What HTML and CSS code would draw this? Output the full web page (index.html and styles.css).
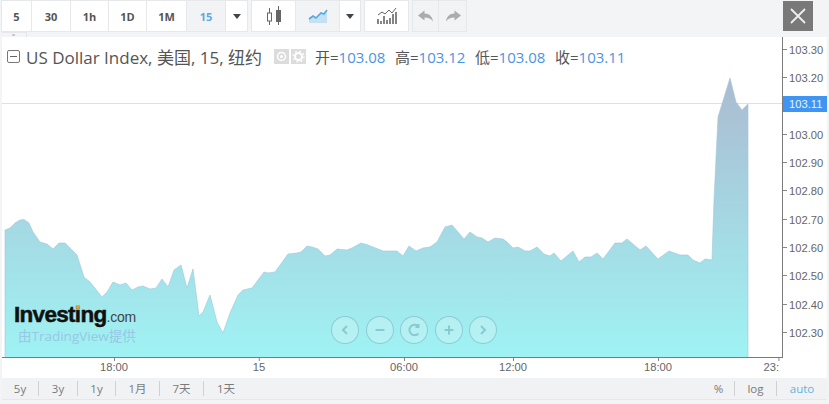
FILE: index.html
```html
<!DOCTYPE html>
<html lang="zh">
<head>
<meta charset="utf-8">
<title>US Dollar Index</title>
<link rel="stylesheet" href="styles.css">
</head>
<body>
<div class="page">
  <header class="toolbar">
    <div class="group">
      <button class="btn w30">5</button>
      <button class="btn w39">30</button>
      <button class="btn w38">1h</button>
      <button class="btn w38">1D</button>
      <button class="btn w40">1M</button>
      <button class="btn w39 active">15</button>
      <button class="btn w21"><span class="caret"></span></button>
    </div>
    <div class="group">
      <button class="btn w44">
        <svg width="16" height="22" viewBox="0 0 16 22"><path d="M3.500 3v5M3.500 16v4M12.500 1v4M12.500 17v3" stroke="#666" fill="none"/><rect x="1.500" y="8" width="4" height="8" fill="#fff" stroke="#666"/><rect x="10" y="5" width="5" height="12" fill="#666"/></svg>
      </button>
      <button class="btn w44 active">
        <svg width="20" height="14" viewBox="0 0 20 14"><path d="M1 10l4-3 3 2 5-5 3 1 3-4v13H1z" fill="#c4e0f3"/><path d="M1 10l4-3 3 2 5-5 3 1 3-4" fill="none" stroke="#5aa7dc" stroke-width="1.600"/></svg>
      </button>
      <button class="btn w20"><span class="caret"></span></button>
    </div>
    <div class="group">
      <button class="btn w43">
        <svg width="20" height="18" viewBox="0 0 20 18"><path d="M1 17v-5M4 17v-3M7 17V9M10 17v-4M13 17v-6M16 17V7M19 17V5" stroke="#666" stroke-width="1.600" fill="none"/><path d="M1 8l4-3 3 2 4-4 3 3 4-5" stroke="#666" fill="none"/></svg>
      </button>
    </div>
    <div class="group">
      <button class="btn w26 muted">
        <svg width="16" height="12" viewBox="0 0 16 12"><path d="M6.500 0.500L0 5.500l6.500 5V7.500c4 0 6.500 1 8.500 4C14.500 7 11.500 3.500 6.500 3.500z" fill="#a9adb1"/></svg>
      </button>
      <button class="btn w27 muted">
        <svg width="16" height="12" viewBox="0 0 16 12"><path d="M9.500 0.500L16 5.500l-6.500 5V7.500c-4 0-6.500 1-8.500 4C1.500 7 4.500 3.500 9.500 3.500z" fill="#a9adb1"/></svg>
      </button>
    </div>
    <button class="close">
      <svg width="16" height="16" viewBox="0 0 16 16"><path d="M1 1l14 14M15 1L1 15" stroke="#eee" stroke-width="1.800" fill="none"/></svg>
    </button>
    <span class="handle"></span>
  </header>

  <main class="chart">
    <div class="plot">
      <svg class="series" width="780" height="321" viewBox="2 37 780 321">
        <defs>
          <linearGradient id="area" gradientUnits="userSpaceOnUse" x1="0" y1="78" x2="0" y2="358">
            <stop offset="0" stop-color="#abbbd0"/>
            <stop offset="1" stop-color="#9ff3f4"/>
          </linearGradient>
        </defs>
        <line class="last" x1="0" x2="782" y1="103.500" y2="103.500"/>
        <path class="fill" d="M5 358V230L10 228L15 223L20 220L24 219.500L29 223L33 232L40 242L47 244L53 249L59 243L65 243L72 250L77 255L84 277L90 282L102 297L107 292L113 282L120 285L126 283L132 290L138 287L143 286L150 289L156 288L162 279L168 287L174 270L181 265L187 288L193 269L199 316L203 312L210 295L217 322L223 333L230 313L238 295L243 290L252 288L258 280L264 272L268 273L275 272L288 254L297 253L301 252L307 246L312 247L318 249L325 256L330 255L337 249L347 250L352 248L361 243L368 245L383 251L397 251L403 256L409 246L416 251L423 248L430 247L437 242L445 227L452 225L458 232L464 239L470 232L477 237L482 238L488 242L495 238L503 239L507 242L513 248L518 247L525 251L530 251L537 247L544 254L550 256L554 253L561 261L573 251L579 262L585 257L591 257L597 253L603 259L615 243L622 243L627 239L640 250L646 246L658 259L669 251L680 255L688 255L693 260L700 263L705 259L712 260L714 200L718 117L730 78L736 102L742 110L748 104V358Z"/>
      </svg>

      <div class="legend">
        <span class="collapse"></span>
        <span class="title">US Dollar Index, 美国, 15, 纽约</span>
        <span class="legend-icons">
          <svg width="15" height="15" viewBox="0 0 15 15"><rect width="15" height="15" fill="#dcdcdc"/><circle cx="7.500" cy="7.500" r="4" fill="none" stroke="#fff" stroke-width="1.500"/><circle cx="7.500" cy="7.500" r="1.500" fill="#fff"/></svg>
          <svg width="15" height="15" viewBox="0 0 15 15"><rect width="15" height="15" fill="#dcdcdc"/><circle cx="7.500" cy="7.500" r="3.500" fill="none" stroke="#fff" stroke-width="2"/><circle cx="7.500" cy="7.500" r="5.500" fill="none" stroke="#fff" stroke-width="1.200" stroke-dasharray="2 2.300"/></svg>
        </span>
        <span class="ohlc">
          <span class="item">开=<b>103.08</b></span>
          <span class="item">高=<b>103.12</b></span>
          <span class="item">低=<b>103.08</b></span>
          <span class="item">收=<b>103.11</b></span>
        </span>
      </div>

      <div class="brand">
        <div class="logo"><span class="logo-main">Investing</span><span class="logo-com">.com</span></div>
        <div class="powered">由TradingView提供</div>
      </div>

      <div class="nav">
        <span class="round"><svg width="12" height="12" viewBox="0 0 12 12"><path d="M8 2L4 6l4 4"/></svg></span>
        <span class="round"><svg width="12" height="12" viewBox="0 0 12 12"><path d="M1.500 6h9"/></svg></span>
        <span class="round"><svg width="14" height="14" viewBox="0 0 14 14"><path d="M11.500 3.500A5.200 5.200 0 1 0 11.500 10.500M11.500 1v3h-3"/></svg></span>
        <span class="round"><svg width="12" height="12" viewBox="0 0 12 12"><path d="M1.500 6h9M6 1.500v9"/></svg></span>
        <span class="round"><svg width="12" height="12" viewBox="0 0 12 12"><path d="M4 2l4 4-4 4"/></svg></span>
      </div>
    </div>

    <div class="price-axis">
      <span class="price" style="top:5px">103.30</span>
      <span class="price" style="top:33px">103.20</span>
      <span class="price tag" style="top:59px">103.11</span>
      <span class="price" style="top:90px">103.00</span>
      <span class="price" style="top:118px">102.90</span>
      <span class="price" style="top:146px">102.80</span>
      <span class="price" style="top:175px">102.70</span>
      <span class="price" style="top:203px">102.60</span>
      <span class="price" style="top:231px">102.50</span>
      <span class="price" style="top:260px">102.40</span>
      <span class="price" style="top:288px">102.30</span>
    </div>

    <div class="time-axis">
      <span class="time" style="left:112px">18:00</span>
      <span class="time" style="left:257px">15</span>
      <span class="time" style="left:402px">06:00</span>
      <span class="time" style="left:511px">12:00</span>
      <span class="time" style="left:656px">18:00</span>
      <span class="time clip" style="left:777px">23:</span>
    </div>
    <div class="corner"></div>
  </main>

  <footer class="ranges">
    <div class="range-group">
      <a class="w37r">5y</a><a class="w39r">3y</a><a class="w38r">1y</a><a class="w44r">1月</a><a class="w44r">7天</a><a class="w44r plain">1天</a>
    </div>
    <div class="range-group">
      <a class="w32r">%</a><a class="w42r">log</a><a class="w50r plain on">auto</a>
    </div>
  </footer>
</div>
</body>
</html>
```

FILE: styles.css
```css
* { box-sizing: border-box; }
html, body { margin: 0; padding: 0; }
body { width: 829px; height: 404px; overflow: hidden; background: #f3f4f6; font-family: "Liberation Sans", Arial, sans-serif; }
.page { width: 829px; height: 404px; display: flex; flex-direction: column; }

/* toolbar */
.toolbar { position: relative; height: 37px; padding: 1px 16px 0 2px; display: flex; align-items: flex-start; gap: 5px; flex: none; }
.group { display: flex; height: 30px; box-shadow: 0 0 0 1px #e6e8ea; }
.btn { height: 30px; padding: 0; border: 0; border-right: 1px solid #e6e8ea; background: #fff; display: flex; align-items: center; justify-content: center; font: bold 11px "Open Sans", sans-serif; color: #555; }
.btn:last-child { border-right: 0; }
.btn.active { background: #f1f3f5; color: #5fa9de; }
.btn.muted { background: #f1f3f5; }
.w20 { width: 20px; } .w21 { width: 21px; } .w26 { width: 26px; } .w27 { width: 27px; } .w30 { width: 30px; }
.w38 { width: 38px; } .w39 { width: 39px; } .w40 { width: 40px; } .w43 { width: 43px; } .w44 { width: 44px; }
.caret { width: 0; height: 0; border-left: 4.500px solid transparent; border-right: 4.500px solid transparent; border-top: 5px solid #444; }
.close { margin-left: auto; width: 30px; height: 30px; padding: 0; border: 0; background: #797979; display: flex; align-items: center; justify-content: center; }
.handle { position: absolute; left: 2px; top: 32px; width: 25px; height: 5px; border-right: 1px solid #e2e4e6; border-top: 1px solid #e6e8ea; }
.handle::after { content: ""; position: absolute; left: 10px; top: 1px; width: 3px; height: 2px; background: #c9cbce; }

/* chart */
.chart { margin-left: 2px; width: 825px; height: 341px; flex: none; background: #fff; display: grid; grid-template-columns: 780px 45px; grid-template-rows: 321px 20px; }
.plot { position: relative; overflow: hidden; border-bottom: 1px solid #7b7b7b; }
.series { display: block; }
.fill { fill: url(#area); stroke: #9fc6d8; stroke-width: .6; }
.last { stroke: #cfe2f6; stroke-width: 1; }

.legend { position: absolute; left: 5px; top: 9px; height: 20px; display: flex; align-items: center; font: 17px "Open Sans", "Noto Sans CJK SC", sans-serif; color: #555; white-space: nowrap; }
.collapse { width: 13px; height: 13px; margin-right: 6px; border: 1px solid #777; border-radius: 2px; position: relative; }
.collapse::after { content: ""; position: absolute; left: 2px; right: 2px; top: 5px; height: 1px; background: #666; }
.title { width: 248px; }
.legend-icons { display: flex; gap: 2px; margin-right: 9px; }
.legend-icons svg { display: block; }
.ohlc { display: flex; font: 15px "Open Sans", "Noto Sans CJK SC", sans-serif; }
.item { width: 80px; }
.item b { font-weight: 400; color: #4a94e6; }

.brand { position: absolute; left: 12px; top: 265px; }
.logo { position: relative; height: 24px; line-height: 24px; white-space: nowrap; }
.logo::after { content: ""; position: absolute; left: 62px; top: 3px; width: 4px; height: 4px; border-radius: 50%; background: #e8a63c; }
.logo-main { font: bold 22.500px "Liberation Sans", sans-serif; letter-spacing: -.7px; color: #111; -webkit-text-stroke: .5px #111; }
.logo-com { font: 14px "Liberation Sans", sans-serif; color: #444; letter-spacing: -.2px; }
.powered { margin: -1px 0 0 4px; font: 13.500px "Open Sans", "Noto Sans CJK SC", sans-serif; color: #97c8e4; white-space: nowrap; }

.nav { position: absolute; left: 329px; top: 279px; display: flex; gap: 6.500px; }
.round { width: 28px; height: 28px; border-radius: 50%; border: 1px solid rgba(110,175,185,.55); background: rgba(255,255,255,.22); display: flex; align-items: center; justify-content: center; }
.round svg { fill: none; stroke: #8cc8cf; stroke-width: 2; }

.price-axis { position: relative; border-left: 1px solid #7b7b7b; }
.price { position: absolute; left: 0; width: 44px; height: 16px; line-height: 16px; padding-left: 6px; font-size: 11.200px; color: #666; }
.price::before { content: ""; position: absolute; left: 0; top: 7px; width: 4px; height: 1px; background: #888; }
.price.tag { background: #3f96f2; color: #e9f3fd; width: 44px; }
.price.tag::before { display: none; }

.time-axis { position: relative; overflow: hidden; }
.time { position: absolute; top: 0; height: 20px; line-height: 19px; font-size: 11.200px; color: #666; transform: translateX(-50%); white-space: nowrap; }
.time::before { content: ""; position: absolute; left: 50%; top: -1px; width: 1px; height: 4px; background: #888; }
.time.clip { transform: translateX(-100%); }
.time.clip::before { left: auto; right: 0; }
.corner { background: #fff; }

/* ranges */
.ranges { margin: 0 2px; height: 22px; flex: none; background: #f1f2f4; display: flex; justify-content: space-between; align-items: center; border-bottom: 1px solid #e6e7e9; }
.range-group { display: flex; }
.range-group a { height: 15px; line-height: 15px; text-align: center; font: 11.500px/15px "Open Sans", "Noto Sans CJK SC", sans-serif; color: #7a7a7a; border-right: 1px solid #cfd1d4; }
.range-group a.plain { border-right: 0; }
.range-group a.on { color: #5fb4de; }
.w37r { width: 37px; } .w39r { width: 39px; } .w38r { width: 38px; } .w44r { width: 44px; } .w32r { width: 32px; } .w42r { width: 42px; } .w50r { width: 50px; }
```
